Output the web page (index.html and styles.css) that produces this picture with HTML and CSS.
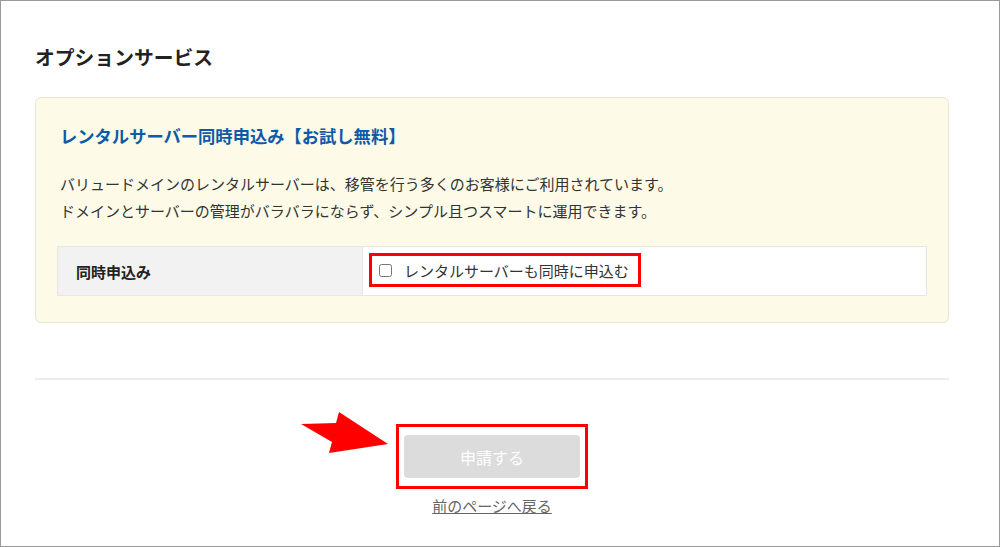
FILE: index.html
```html
<!DOCTYPE html>
<html lang="ja">
<head>
<meta charset="utf-8">
<title>オプションサービス</title>
<link rel="stylesheet" href="styles.css">
</head>
<body>
<div class="frame">
  <h2 class="section-title">オプションサービス</h2>
  <div class="option-box">
    <h3 class="option-title">レンタルサーバー同時申込み【お試し無料】</h3>
    <p class="option-desc">バリュードメインのレンタルサーバーは、移管を行う多くのお客様にご利用されています。<br>ドメインとサーバーの管理がバラバラにならず、シンプル且つスマートに運用できます。</p>
    <div class="option-table">
      <div class="cell-head">同時申込み</div>
      <div class="cell-body">
        <label class="check-label"><input type="checkbox" class="check"><span>レンタルサーバーも同時に申込む</span></label>
      </div>
    </div>
  </div>
  <hr class="divider">
  <div class="actions">
    <div class="submit-wrap">
      <svg class="arrow" viewBox="300 410 90 45" width="90" height="45" aria-hidden="true">
        <polygon points="301,424 336,423 339,412 388,444 329,453 332,442" fill="#ff0000"/>
      </svg>
      <button class="submit" type="button" disabled>申請する</button>
    </div>
    <a class="back-link" href="#">前のページへ戻る</a>
  </div>
</div>
</body>
</html>
```

FILE: styles.css
```css
* { box-sizing: border-box; }
html, body { margin: 0; padding: 0; background: #fff; }
body {
  font-family: "Noto Sans CJK JP", "Noto Sans", sans-serif;
  color: #333;
}
.frame {
  width: 1000px;
  height: 547px;
  border: 1px solid #9a9a9a;
  padding: 42px 50px 0 34px;
  overflow: hidden;
}
.section-title {
  margin: 0;
  font-size: 19.8px;
  line-height: 28px;
  font-weight: bold;
  color: #222;
}
.option-box {
  margin-top: 26px;
  width: 914px;
  background: #fdfae8;
  border: 1px solid #e8e6d3;
  border-radius: 6px;
  padding: 26px 21px 26px 21px;
}
.option-title {
  margin: 0;
  padding-left: 3px;
  font-size: 17.3px;
  line-height: 24px;
  font-weight: bold;
  color: #0c5aa9;
}
.option-desc {
  margin: 22px 0 22px;
  padding-left: 3px;
  font-size: 15px;
  line-height: 27px;
  color: #333;
}
.option-table {
  display: grid;
  grid-template-columns: 305px 1fr;
  border: 1px solid #e6e6e3;
  height: 50px;
  background: #fff;
}
.cell-head {
  background: #f2f2f2;
  border-right: 1px solid #e6e6e3;
  display: flex;
  align-items: center;
  padding-left: 18px;
  font-size: 15px;
  font-weight: bold;
  color: #222;
}
.cell-body {
  display: flex;
  align-items: center;
  padding: 0 6px 2px;
}
.check-label {
  display: inline-flex;
  align-items: center;
  height: 34px;
  border: 3px solid #ff0000;
  padding: 0 9px 0 7px;
  font-size: 15px;
  color: #333;
}
.check {
  margin: 0 12px 0 0;
  width: 13px;
  height: 13px;
}
.divider {
  margin: 55px 0 0;
  width: 914px;
  border: 0;
  height: 2px;
  background: #ededed;
}
.actions {
  width: 914px;
  display: flex;
  flex-direction: column;
  align-items: center;
  padding-top: 44px;
}
.submit-wrap {
  position: relative;
  border: 3px solid #ff0000;
  padding: 8px 5px;
}
.arrow {
  position: absolute;
  left: -99px;
  top: -17px;
}
.submit {
  display: block;
  width: 176px;
  height: 43px;
  border: 0;
  border-radius: 4px;
  background: #dcdcdc;
  color: #fff;
  font-family: inherit;
  font-size: 16px;
  padding: 0;
}
.back-link {
  margin-top: 7px;
  font-size: 15px;
  line-height: 20px;
  color: #666;
  text-decoration: underline;
}
```
